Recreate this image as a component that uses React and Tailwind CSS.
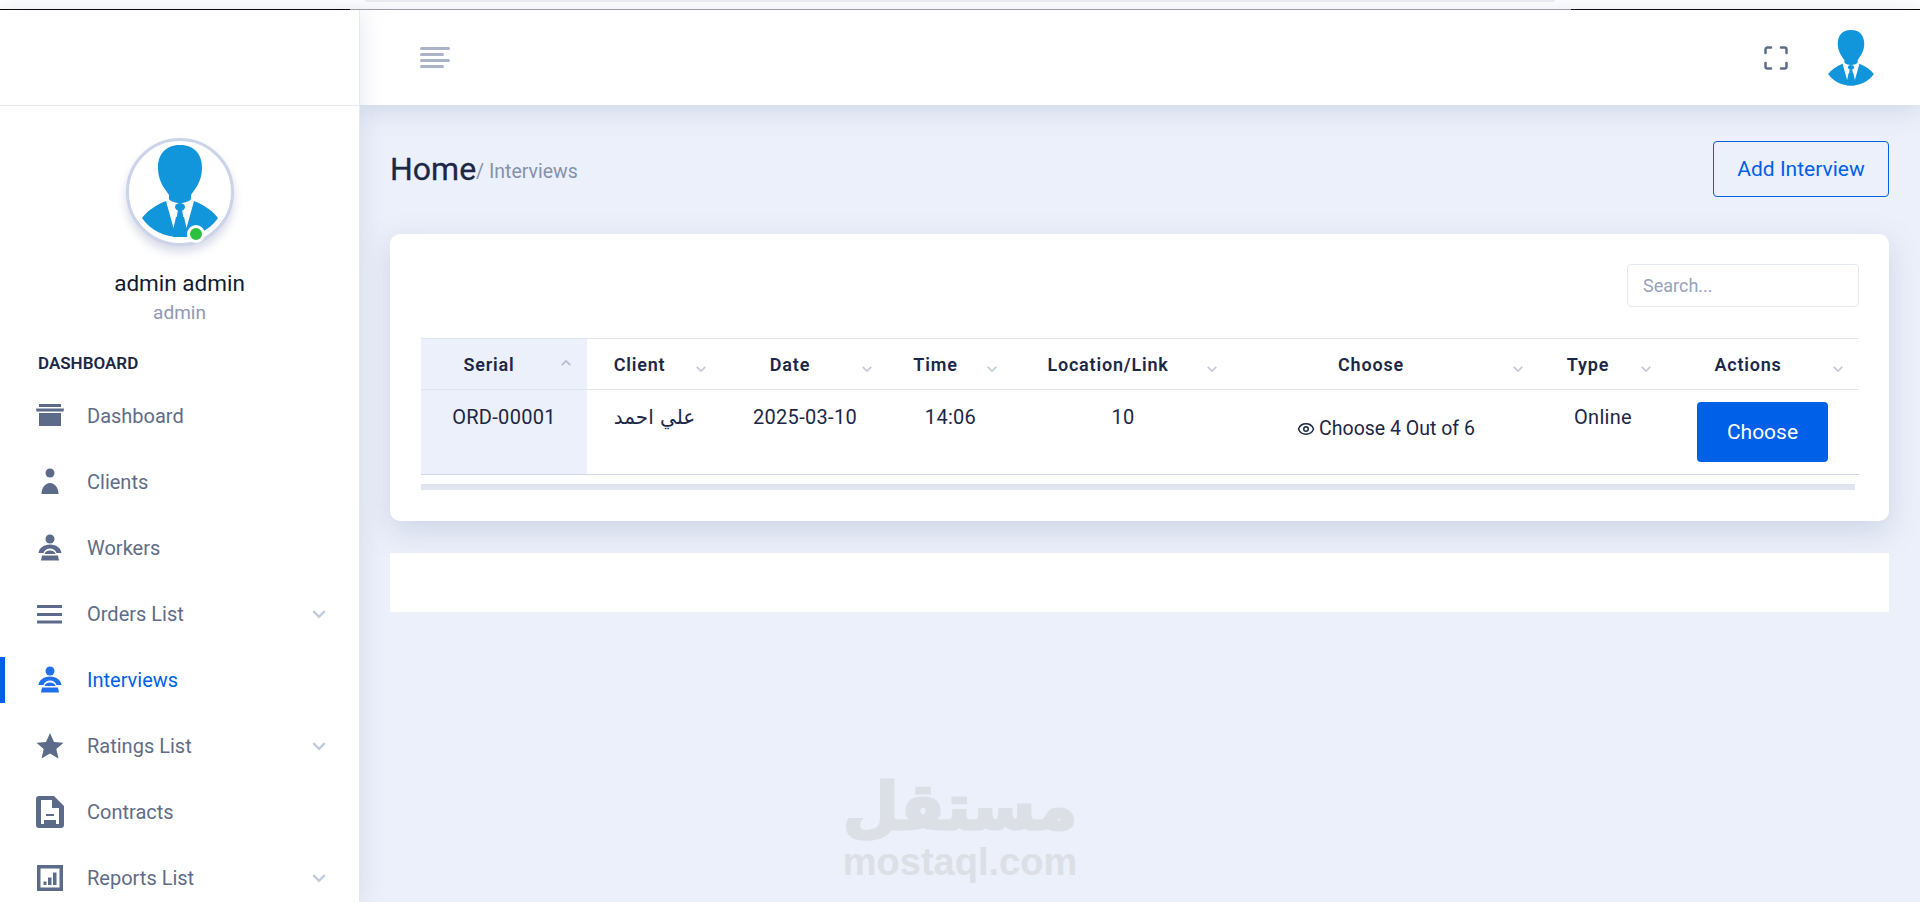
import { Eye } from 'lucide-react';

function Person({ className }) {
    return (
        <svg viewBox="0 0 76 93" className={className} fill="#1296db">
            <path d="M38 0C53 0 60.500 10 60 24C59.500 38 52 45 49 50L49 54C48 56 43 58 38 58C33 58 28 56 27 54L27 50C24 45 16.500 38 16 24C15.500 10 23 0 38 0z" />
            <path d="M24 56C14 60 5 66 0 73C8 85 22 92 38 92C54 92 68 85 76 73C71 66 62 60 52 56L44.500 83L42 72L34 72L31.500 83z" />
            <ellipse cx="38" cy="62" rx="5" ry="4" />
            <path d="M36 65h4l5 27h-14z" />
        </svg>
    );
}

function DashIcon() {
    return (
        <svg viewBox="0 0 28 24" className="w-[28px] h-[24px]" fill="#5c6b8a">
            <path d="M3 0h22v3H3zM0 4.500h28l-0.500 3H0.500zM3 9h22v13H3z" />
        </svg>
    );
}

function ClientIcon() {
    return (
        <svg viewBox="0 0 28 28" className="w-[28px] h-[28px]" fill="#5c6b8a">
            <circle cx="14" cy="5" r="4.500" />
            <path d="M5.500 26c0-6 3.500-11 8.500-11s8.500 5 8.500 11z" />
        </svg>
    );
}

function WorkerIcon({ color = '#5c6b8a' }) {
    return (
        <svg viewBox="0 0 28 28" className="w-[28px] h-[28px]" fill={color}>
            <circle cx="14" cy="5" r="4.500" />
            <path d="M2.500 19C3 14 8 10.500 14 10.500S25 14 25.500 19h-5c-1-3-3.500-4.500-6.500-4.500S8.500 16 7.500 19z" />
            <path d="M14 16.500c3 0 5 1.500 5.500 3.500H8.500c.5-2 2.500-3.500 5.500-3.500zM6 21.500h16l1 5H5z" />
        </svg>
    );
}

function LinesIcon() {
    return (
        <svg viewBox="0 0 28 20" className="w-[28px] h-[20px]" fill="#5c6b8a">
            <path d="M1 1h25v3H1zM1 9h25v3H1zM1 16.500h25v3H1z" />
        </svg>
    );
}

function StarIcon() {
    return (
        <svg viewBox="0 0 28 28" className="w-[28px] h-[28px]" fill="#5c6b8a">
            <path d="M14 1l4 9 9.500.8-7.200 6.300 2.200 9.400L14 21.500l-8.500 5 2.200-9.400L.5 10.800 10 10z" />
        </svg>
    );
}

function FileIcon() {
    return (
        <svg viewBox="0 0 28 32" className="w-[28px] h-[32px]" fill="#5c6b8a">
            <path fillRule="evenodd" d="M3 0h15l10 10v19a3 3 0 0 1-3 3H3a3 3 0 0 1-3-3V3a3 3 0 0 1 3-3zM5 4v24h3v-4h12v4h3V12h-7V4zM10 18h8v2h-8z" />
        </svg>
    );
}

function ReportIcon() {
    return (
        <svg viewBox="0 0 26 26" className="w-[26px] h-[26px]" fill="#5c6b8a">
            <path fillRule="evenodd" d="M0 0h26v26H0zM3.500 3.500v19h19v-19zM6.500 16.500h3v3.500h-3zM11 12.500h3.500V20H11zM16 7.500h3.500V20H16z" />
        </svg>
    );
}

function Chevron({ className = 'text-[#c3cadb]', size = 14 }) {
    return (
        <svg viewBox="0 0 14 14" width={size} height={size} className={className} fill="none" stroke="currentColor" strokeWidth="2">
            <path d="M2 4.500l5 5 5-5" />
        </svg>
    );
}

const menu = [
    { label: 'Dashboard', icon: <DashIcon /> },
    { label: 'Clients', icon: <ClientIcon /> },
    { label: 'Workers', icon: <WorkerIcon /> },
    { label: 'Orders List', icon: <LinesIcon />, sub: true },
    { label: 'Interviews', icon: <WorkerIcon color="#1f6fe8" />, active: true },
    { label: 'Ratings List', icon: <StarIcon />, sub: true },
    { label: 'Contracts', icon: <FileIcon /> },
    { label: 'Reports List', icon: <ReportIcon />, sub: true },
];

const columns = [
    { title: 'Serial', w: 'w-[166px]', up: true },
    { title: 'Client', w: 'w-[135px]' },
    { title: 'Date', w: 'w-[166px]' },
    { title: 'Time', w: 'w-[125px]' },
    { title: 'Location/Link', w: 'w-[220px]' },
    { title: 'Choose', w: 'w-[306px]' },
    { title: 'Type', w: 'w-[128px]' },
    { title: 'Actions', w: 'w-[192px]' },
];

export default function App() {
    return (
        <div className="h-[902px] overflow-hidden flex flex-col bg-[#ebf0fa] font-['Roboto',sans-serif]">
            {/* strip from the browser capture */}
            <div className="h-[10px] shrink-0 bg-white flex flex-col justify-between">
                <div className="h-[2px] mx-[365px] bg-[#eeeef2] rounded-b" />
                <div className="flex h-px">
                    <div className="w-[350px] bg-black" />
                    <div className="flex-1 bg-[#a0a0a8]" />
                    <div className="w-[349px] bg-black" />
                </div>
            </div>

            <div className="flex flex-1 min-h-0">
                <aside className="relative z-10 w-[360px] shrink-0 bg-white border-r border-[#e8eaf2] shadow-[0_0_24px_rgba(120,130,170,0.2)] flex flex-col">
                    <div className="h-[96px] shrink-0 border-b border-[#e8eaf1]" />
                    <div className="flex flex-col items-center pt-[32px]">
                        <div className="relative w-[108px] h-[108px] rounded-full bg-white border-[3px] border-[#cbd4e8] shadow-[0_6px_10px_rgba(140,150,190,0.35)] flex justify-center pt-[4px]">
                            <Person className="w-[76px] h-[93px]" />
                            <span className="absolute right-[26px] bottom-0 w-[18px] h-[18px] rounded-full bg-[#2dbf3f] border-[3px] border-white" />
                        </div>
                        <div className="mt-[22px] text-[22.500px] leading-[30px] text-[#111a33]">admin admin</div>
                        <div className="mt-[2px] text-[19px] leading-[26px] text-[#8e99b3]">admin</div>
                    </div>
                    <div className="pl-[38px] mt-[27px] text-[17px] leading-[20px] font-semibold text-[#1c2746]">DASHBOARD</div>
                    <nav className="mt-[10px] flex flex-col">
                        {menu.map((item) => (
                            <div key={item.label} className="relative h-[66px] shrink-0 flex items-center pl-[36px] pr-[32px]">
                                {item.active && <span className="absolute left-0 top-[10px] w-[5px] h-[46px] bg-[#0060e8]" />}
                                <span className="w-[28px] flex justify-center">{item.icon}</span>
                                <span className={`ml-[23px] text-[20px] ${item.active ? 'text-[#0060e8]' : 'text-[#5f6c88]'}`}>{item.label}</span>
                                {item.sub && <Chevron className="ml-auto text-[#c3cadb]" size={16} />}
                            </div>
                        ))}
                    </nav>
                </aside>

                <div className="flex-1 min-w-0 flex flex-col relative">
                    <header className="h-[95px] shrink-0 bg-white shadow-[0_4px_24px_rgba(120,130,170,0.25)] flex items-center pl-[60px] pr-[46px] relative">
                        <div className="flex flex-col gap-[3px] w-[30px]">
                            <span className="h-[3px] w-[30px] rounded bg-[#aab3c8]" />
                            <span className="h-[3px] w-[24px] rounded bg-[#aab3c8]" />
                            <span className="h-[3px] w-[30px] rounded bg-[#aab3c8]" />
                            <span className="h-[3px] w-[24px] rounded bg-[#aab3c8]" />
                        </div>
                        <svg viewBox="0 0 24 24" className="ml-auto w-[24px] h-[24px]" fill="none" stroke="#5f6c88" strokeWidth="2.500" strokeLinecap="round">
                            <path d="M1.500 7V3.500a2 2 0 0 1 2-2H7M17 1.500h3.500a2 2 0 0 1 2 2V7M22.500 17v3.500a2 2 0 0 1-2 2H17M7 22.500H3.500a2 2 0 0 1-2-2V17" />
                        </svg>
                        <Person className="ml-[40px] w-[46px] h-[56px]" />
                    </header>

                    <main className="flex-1 pl-[30px] pr-[31px] relative">
                        <div className="flex items-center justify-between pt-[36px]">
                            <div className="flex items-baseline">
                                <span className="text-[32px] leading-[40px] text-[#1c2746] [-webkit-text-stroke:0.3px_#1c2746]">Home</span>
                                <span className="relative -top-[2px] text-[19.500px] text-[#8492ab]">/ Interviews</span>
                            </div>
                            <button className="w-[176px] h-[56px] pt-[2px] rounded-[4px] border border-[#0060e8] text-[21px] text-[#0060e8]">Add Interview</button>
                        </div>

                        <section className="mt-[37px] h-[287px] bg-white rounded-[10px] shadow-[0_10px_30px_rgba(120,130,170,0.25)] pt-[30px] pl-[31px] pr-[30px]">
                            <div className="flex justify-end">
                                <input placeholder="Search..." className="w-[232px] h-[43px] rounded-[4px] border border-[#e4e9f5] px-[15px] text-[18px] placeholder:text-[#98a2b8] outline-none" />
                            </div>
                            <table className="mt-[31px] w-[1438px] table-fixed border-collapse text-[20px] tracking-[0.3px] text-[#1c2746]">
                                <colgroup>
                                    {columns.map((c) => <col key={c.title} className={c.w} />)}
                                </colgroup>
                                <thead>
                                    <tr className="h-[51px] border-y border-[#dfe4f0]">
                                        {columns.map((c) => (
                                            <th key={c.title} className={`relative pl-[10px] pr-[40px] text-center text-[18px] font-semibold tracking-[0.8px] text-[#1c2746] ${c.up ? 'bg-[#ebf0fa]' : ''}`}>
                                                {c.title}
                                                <span className={`absolute right-[15px] ${c.up ? 'top-[18px]' : 'top-[24px]'}`}>
                                                    <Chevron size={12} className={c.up ? 'rotate-180 text-[#b5bdd0]' : 'text-[#c3cadb]'} />
                                                </span>
                                            </th>
                                        ))}
                                    </tr>
                                </thead>
                                <tbody>
                                    <tr className="h-[85px] border-b border-[#cfd6e6] align-top text-center">
                                        <td className="pt-[12px] bg-[#ebf0fa]">ORD-00001</td>
                                        <td className="pt-[12px] font-['DejaVu_Sans',sans-serif]" dir="rtl">علي احمد</td>
                                        <td className="pt-[12px]">2025-03-10</td>
                                        <td className="pt-[12px]">14:06</td>
                                        <td className="pt-[12px]">10</td>
                                        <td className="pt-[24px] text-[19.500px] tracking-normal">
                                            <span className="inline-flex items-center gap-[4px]"><Eye size={18} strokeWidth={2} />Choose 4 Out of 6</span>
                                        </td>
                                        <td className="pt-[12px]">Online</td>
                                        <td className="pt-[12px] pl-[30px] pr-[31px]">
                                            <button className="w-[131px] h-[60px] pt-[2px] rounded-[4px] bg-[#0060e8] text-white text-[21px] tracking-normal">Choose</button>
                                        </td>
                                    </tr>
                                </tbody>
                            </table>
                            <div className="mt-[9px] h-[6px] w-[1434px] bg-[#e0e5f1]" />
                        </section>

                        <div className="mt-[32px] h-[59px] bg-white" />

                        <div className="absolute left-[484px] top-[668px] w-[232px] flex flex-col items-center text-[#dddfe6] select-none">
                            <span className="text-[64px] leading-[68px] font-bold font-['DejaVu_Sans',sans-serif] [-webkit-text-stroke:3px_#dddfe6]">مستقل</span>
                            <span className="text-[38px] leading-[42px] font-bold font-['Liberation_Sans',sans-serif]">mostaql.com</span>
                        </div>
                    </main>
                </div>
            </div>
        </div>
    );
}
